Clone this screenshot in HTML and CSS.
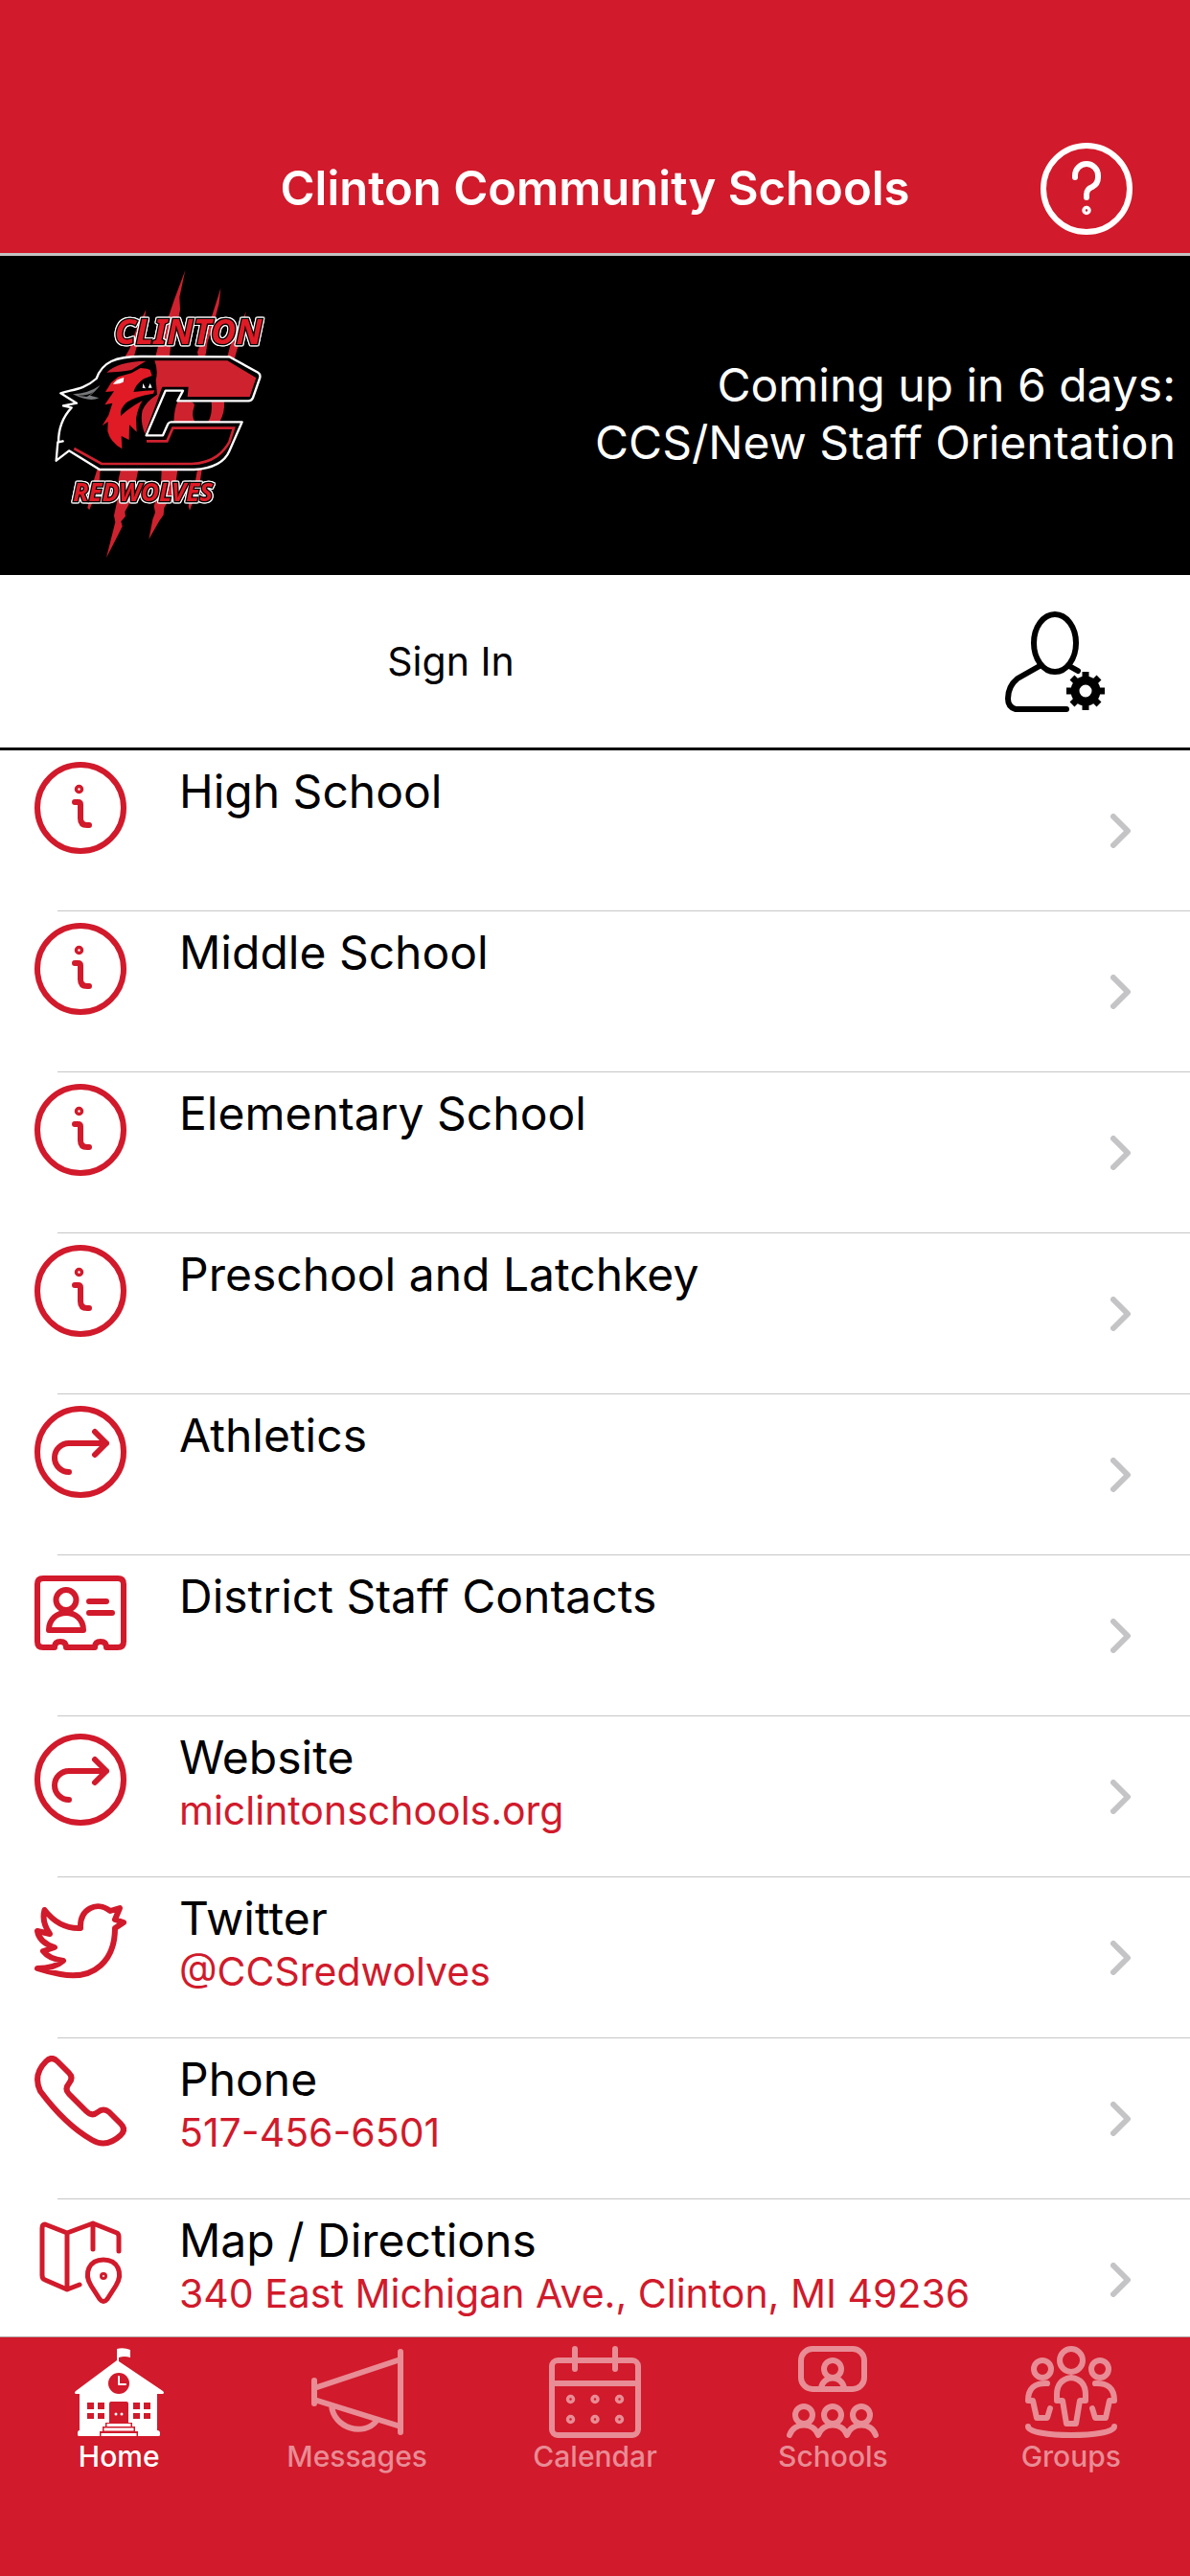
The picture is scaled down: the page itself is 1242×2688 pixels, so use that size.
FILE: index.html
```html
<!DOCTYPE html>
<html lang="en">
<head>
  <meta charset="UTF-8">
  <meta name="viewport" content="width=device-width, initial-scale=1">
  <title>Clinton Community Schools</title>
  <link rel="stylesheet" href="styles.css">
</head>
<body>
  <!-- Shared icons -->
  <svg class="sprite" aria-hidden="true">
    <symbol id="icon-info" viewBox="0 0 96 96">
      <circle cx="48" cy="48" r="45"/>
      <circle cx="46.500" cy="28.500" r="3" stroke-width="3.500"/>
      <path d="M42 42h3.500q2.500 0 2.500 2.500V59q0 7 7 7h2"/>
    </symbol>
    <symbol id="icon-link" viewBox="0 0 96 96">
      <circle cx="48" cy="48" r="45"/>
      <path d="M36 69a15 15 0 0 1 0-30h39M63 27l12 12-12 12"/>
    </symbol>
    <symbol id="icon-chevron" viewBox="0 0 22 36">
      <path d="M3 3l15 15L3 33"/>
    </symbol>
  </svg>

  <header class="topbar">
    <h1>Clinton Community Schools</h1>
    <button class="help" type="button" aria-label="Help">
      <svg class="icon" viewBox="0 0 96 96">
        <circle cx="48" cy="48" r="45"/>
        <path d="M36 36v-2a12 12 0 0 1 24 0v2c0 5-2 8-6 10-4 1.500-6 4-6 8v3"/>
        <circle cx="48" cy="70.500" r="3" stroke-width="3.500"/>
      </svg>
    </button>
  </header>

  <section class="banner">
    <svg class="logo" viewBox="0 21 900 999" role="img" aria-label="Clinton Redwolves">
      <!-- claw marks -->
      <g fill="#cf222f">
        <path d="M580 66L562 150 564 190 552 250 535 300 530 340H486L496 300 530 205 545 160z"/>
        <path d="M691 122L686 170 670 230 650 290 645 325 640 345H622L618 322 630 290 665 205z"/>
        <path d="M457 190l-8 60-22 60-10 35h-30l20-35 20-60z"/>
        <path d="M770 195l-10 70-18 50-8 30h-24l10-40 30-60z"/>
        <path d="M556 478h40q16 3 12 15-10 28 2 47h-66q2-42 12-62z"/>
        <path d="M662 478h40q2 35-14 62h-36q14-24 10-62z"/>
        <path d="M304 690h10l-4 50-30 76-6-6 18-80z"/>
        <path d="M378 690h55l-10 50-20 60-12 22 2 14-14 16 4 16-10 20-40 78 28-112-4-20 16-74-2-40z"/>
        <path d="M506 690h50l-8 60-34 60-2 22-14 20-32 56 12-62 8-22-4-20 22-66z"/>
        <path d="M618 690h14l-6 40-32 88-4-14 22-80z"/>
      </g>
      <!-- big C -->
      <path d="M718 337L808 386q8 5 6 16L792 465q-4 10-14 10H556l17-32H518L458 583h52l16-36q3-6 10-6H758L718 632q-22 52-110 58H312L216 631l-40 31 5-58 16-3-14 3c0-40 10-75 41-108l-26-6 42-8-50-31c35-12 72-10 112-46 18-52 60-69 140-69z" fill="#000" stroke="#fff" stroke-width="7" stroke-linejoin="round"/>
      <path d="M484 349H712L802 403 782 462H587L590 431H508L454 578Q438 540 446 505 456 478 492 455L488 410Q496 380 484 349z" fill="#cf222f"/>
      <path d="M232 624l86 48H600c70-2 100-38 118-68l14-44H541l-18 41h-64" fill="none" stroke="#cf222f" stroke-width="8"/>
      <!-- wolf head -->
      <path d="M334 386Q368 352 457 350 430 366 412 378 380 384 334 386z" fill="#cf222f"/>
      <path d="M370 400L412 388 440 372 460 374 470 378 476 396 450 406Q424 424 418 447L455 443 484 442 480 452Q420 462 396 480 374 500 378 522L396 506Q420 488 446 474 432 495 426 530L428 572 405 550 404 597 380 585 382 625Q346 605 337 570L338 540 320 553 340 520 352 482 328 487 357 445 330 447 348 418z" fill="#e01b26"/>
      <path d="M354 422q12-16 34-20l-2 14q-14 8-32 6z" fill="#fff"/>
      <path d="M446 434l2-14 8 16zM464 434l6-14 6 14z" fill="#fff"/>
      <path d="M228 454q48-2 86-28-18 22-32 32l28 8q-30 14-82-12z" fill="#77787b"/>
      <path d="M244 458q34 0 50-12-12 10-22 16z" fill="#000"/>
      <text class="logo-name" x="359" y="297" font-size="108">CLINTON</text>
      <text class="logo-name" x="229" y="788" font-size="78">REDWOLVES</text>
    </svg>
    <p>Coming up in 6 days:<br>CCS/New Staff Orientation</p>
  </section>

  <section class="account">
    <a href="#signin" class="signin">Sign In</a>
    <button class="settings" type="button" aria-label="Account settings">
      <svg class="icon" viewBox="0 0 106 106">
        <ellipse cx="52" cy="34" rx="22" ry="30"/>
        <path d="M36 58L13 71Q3 79 3 92q0 9 8 11H64M67 58l9 5"/>
        <g transform="translate(84 84)">
          <circle r="11" stroke-width="9"/>
          <path d="M0-20V-13M0 20V13M-20 0H-13M20 0H13M-14-14L-9-9M14 14L9 9M14-14L9-9M-14 14L-9 9" stroke-width="7" stroke-linecap="butt"/>
        </g>
      </svg>
    </button>
  </section>

  <main class="menu">
    <a class="row" href="#high-school">
      <svg class="icon"><use href="#icon-info"/></svg>
      <span class="text"><span class="name">High School</span></span>
      <svg class="chevron"><use href="#icon-chevron"/></svg>
    </a>
    <a class="row" href="#middle-school">
      <svg class="icon"><use href="#icon-info"/></svg>
      <span class="text"><span class="name">Middle School</span></span>
      <svg class="chevron"><use href="#icon-chevron"/></svg>
    </a>
    <a class="row" href="#elementary-school">
      <svg class="icon"><use href="#icon-info"/></svg>
      <span class="text"><span class="name">Elementary School</span></span>
      <svg class="chevron"><use href="#icon-chevron"/></svg>
    </a>
    <a class="row" href="#preschool">
      <svg class="icon"><use href="#icon-info"/></svg>
      <span class="text"><span class="name">Preschool and Latchkey</span></span>
      <svg class="chevron"><use href="#icon-chevron"/></svg>
    </a>
    <a class="row" href="#athletics">
      <svg class="icon"><use href="#icon-link"/></svg>
      <span class="text"><span class="name">Athletics</span></span>
      <svg class="chevron"><use href="#icon-chevron"/></svg>
    </a>
    <a class="row" href="#staff">
      <svg class="icon" viewBox="0 0 96 96">
        <path d="M21 84H9q-6 0-6-6V18q0-6 6-6H87q6 0 6 6V78q0 6-6 6H75q0-6-6-6t-6 6H33q0-6-6-6t-6 6z"/>
        <circle cx="33" cy="34.500" r="10.500"/>
        <path d="M15 66c0-24 36-24 36 0zM57 36H75M57 48H81"/>
      </svg>
      <span class="text"><span class="name">District Staff Contacts</span></span>
      <svg class="chevron"><use href="#icon-chevron"/></svg>
    </a>
    <a class="row detailed" href="#website">
      <svg class="icon"><use href="#icon-link"/></svg>
      <span class="text"><span class="name">Website</span><span class="detail">miclintonschools.org</span></span>
      <svg class="chevron"><use href="#icon-chevron"/></svg>
    </a>
    <a class="row detailed" href="#twitter">
      <svg class="icon" viewBox="0 0 96 96">
        <path d="M10.500 16Q26 36 48 35C47 15 65 6 79 17l10-3-5 12 9 3-9 6C84 68 63 90 27 83Q15 81 3 77q18 0 27-8-15-2-21-10l12-4Q5 50 3 38l13 3Q7 28 10.500 16z"/>
      </svg>
      <span class="text"><span class="name">Twitter</span><span class="detail">@CCSredwolves</span></span>
      <svg class="chevron"><use href="#icon-chevron"/></svg>
    </a>
    <a class="row detailed" href="tel:517-456-6501">
      <svg class="icon" viewBox="0 0 96 96">
        <path d="M12 6q6-6 12 0l12 12q5 5 0 11-5 6 0 11l18 18q6 6 12 1 6-5 12 0l12 12q6 6 0 12-15 14-30 5Q32 72 6 37-2 20 12 6z"/>
      </svg>
      <span class="text"><span class="name">Phone</span><span class="detail">517-456-6501</span></span>
      <svg class="chevron"><use href="#icon-chevron"/></svg>
    </a>
    <a class="row detailed" href="#map">
      <svg class="icon" viewBox="0 0 96 96">
        <g stroke-width="5">
          <path d="M34 17L11 8Q8 8 8 12V61q0 4 3 5L34 76 47 71M34 17V76M34 17L61 7 86 17q2 1 2 4V36M61 7V34"/>
          <path d="M72 45c-15 0-21 14-13 27l9 14q4 5 8 0l9-14c8-13 2-27-13-27z"/>
          <circle cx="72" cy="62" r="1.500"/>
        </g>
      </svg>
      <span class="text"><span class="name">Map / Directions</span><span class="detail">340 East Michigan Ave., Clinton, MI 49236</span></span>
      <svg class="chevron"><use href="#icon-chevron"/></svg>
    </a>
  </main>

  <nav class="tabs">
    <a class="tab active" href="#home">
      <svg class="icon" viewBox="0 0 96 96">
        <g fill="#fff" stroke="none">
          <path d="M46 3q7-2 14 1v8q-6-2-12 0v4L94 47q2 2 0 3H88V88q3 0 3 3v2q0 1-2 1H7q-2 0-2-1V91q0-3 2-3V50H3q-2-1 0-3L46 15z"/>
        </g>
        <g fill="#d11a2b" stroke="none">
          <circle cx="48" cy="39" r="11"/>
          <path d="M15 59h7v7h-7zM26 59h7v7h-7zM15 70h7v6h-7zM26 70h7v6h-7zM63 59h7v7h-7zM74 59h7v7h-7zM63 70h7v6h-7zM74 70h7v6h-7zM38 60q0-2 2-2H56q2 0 2 2V80H38z"/>
          <path d="M34 80H62v4h3v5h3v5H28V89h3V84h3z"/>
        </g>
        <path d="M48 32v8h7" stroke-width="2"/>
        <path d="M35.500 82.500h25M32.500 87h31M29.500 92.500h37" stroke-width="3" stroke-linecap="butt"/>
        <circle cx="45" cy="71" r="1.500" fill="#fff" stroke="none"/>
        <circle cx="51" cy="71" r="1.500" fill="#fff" stroke="none"/>
      </svg>
      <span>Home</span>
    </a>
    <a class="tab" href="#messages">
      <svg class="icon" viewBox="0 0 96 96">
        <path d="M3 36V60M93 6V90M3 44L93 14M3 56L93 84M21 62c2 24 34 33 47 16"/>
      </svg>
      <span>Messages</span>
    </a>
    <a class="tab" href="#calendar">
      <svg class="icon" viewBox="0 0 96 96">
        <rect x="3" y="15" width="90" height="78" rx="6"/>
        <path d="M3 39H93M27 3V24M69 3V24"/>
        <g stroke-width="3.500">
          <circle cx="22.500" cy="55.500" r="3"/><circle cx="48" cy="55.500" r="3"/><circle cx="73.500" cy="55.500" r="3"/>
          <circle cx="22.500" cy="76.500" r="3"/><circle cx="48" cy="76.500" r="3"/><circle cx="73.500" cy="76.500" r="3"/>
        </g>
      </svg>
      <span>Calendar</span>
    </a>
    <a class="tab" href="#schools">
      <svg class="icon" viewBox="0 0 96 96">
        <rect x="15" y="3" width="66" height="42" rx="12"/>
        <circle cx="48" cy="24" r="9"/>
        <path d="M36 44c2-14 22-14 24 0"/>
        <circle cx="18" cy="72" r="9"/><circle cx="48" cy="72" r="9"/><circle cx="78" cy="72" r="9"/>
        <path d="M3 93c5-14 25-14 30 0 5-14 25-14 30 0 5-14 25-14 30 0"/>
      </svg>
      <span>Schools</span>
    </a>
    <a class="tab" href="#groups">
      <svg class="icon" viewBox="0 0 96 96">
        <circle cx="48" cy="15" r="12"/>
        <circle cx="18" cy="24" r="9"/><circle cx="78" cy="24" r="9"/>
        <path d="M48 33q-15 2-15 18v6h6l4 24H53l4-24h6V51Q63 35 48 33z"/>
        <path d="M23 39Q3 38 3 57H8l4 18h11l3-10M73 39q20-1 20 18H88l-4 18H73L70 65M3 84c0 12 90 12 90 0"/>
      </svg>
      <span>Groups</span>
    </a>
  </nav>
</body>
</html>
```
FILE: styles.css
```css
* { box-sizing: border-box; }
body { margin: 0; height: 100vh; display: flex; flex-direction: column; background: #fff; color: #000; font-family: Inter, "Liberation Sans", sans-serif; }
a { color: inherit; text-decoration: none; }
button { padding: 0; border: none; background: none; color: inherit; }
.sprite { display: none; }
.icon { display: block; flex: none; width: 96px; height: 96px; fill: none; stroke: currentColor; stroke-width: 6; stroke-linecap: round; stroke-linejoin: round; }

/* Header */
.topbar { display: grid; grid-template-columns: 1fr auto 1fr; align-items: center; padding: 133px 60px 3px; height: 267px; background: #d11a2b; color: #fff; border-bottom: 3px solid #c4c4c4; }
.topbar h1 { grid-column: 2; margin: 0; font-size: 49px; line-height: 60px; font-weight: 600; }
.help { justify-self: end; }

/* Banner */
.banner { display: flex; align-items: center; justify-content: space-between; padding-right: 15px; background: #000; color: #fff; }
.logo { width: 300px; height: 333px; }
.banner p { margin: 0; padding-bottom: 3px; font-size: 48px; line-height: 60px; text-align: right; }
.logo-name { font-family: "Noto Sans", sans-serif; font-weight: 700; font-style: italic; fill: #e01b26; stroke: #000; stroke-width: 8; paint-order: stroke; filter: drop-shadow(3px 0 0 #fff) drop-shadow(-3px 0 0 #fff) drop-shadow(0 3px 0 #fff) drop-shadow(0 -3px 0 #fff); }

/* Sign in */
.account { display: flex; align-items: center; height: 183px; padding-right: 87px; border-bottom: 3px solid #000; }
.signin { flex: 1; padding-right: 108px; text-align: center; font-size: 41px; line-height: 50px; }
.settings .icon { width: 106px; height: 106px; }

/* Menu list */
.menu { flex: 1; min-height: 0; overflow-y: auto; scrollbar-width: none; }
.row { display: flex; height: 168px; padding: 12px 61px 0 36px; color: #d11a2b; background: linear-gradient(#c6c6c8, #c6c6c8) 60px 100% / 100% 1px no-repeat; }
.text { flex: 1; margin-left: 55px; padding-top: 1px; }
.name, .detail { display: block; white-space: nowrap; }
.name { color: #000; font-size: 48px; line-height: 60px; }
.detail { font-size: 41px; line-height: 50px; }
.detailed .icon { margin-top: 6px; }
.chevron { align-self: center; width: 22px; height: 36px; margin-bottom: 12px; fill: none; stroke: #c4c4c6; stroke-width: 6; stroke-linecap: round; stroke-linejoin: round; }

/* Tab bar */
.tabs { display: flex; height: 250px; border-top: 1px solid #b0a0a0; background: #d11a2b; color: #e88c95; }
.tab { flex: 1; display: flex; flex-direction: column; align-items: center; padding-top: 9px; font-size: 30px; line-height: 38px; font-weight: 500; }
.active { color: #fff; }
```
